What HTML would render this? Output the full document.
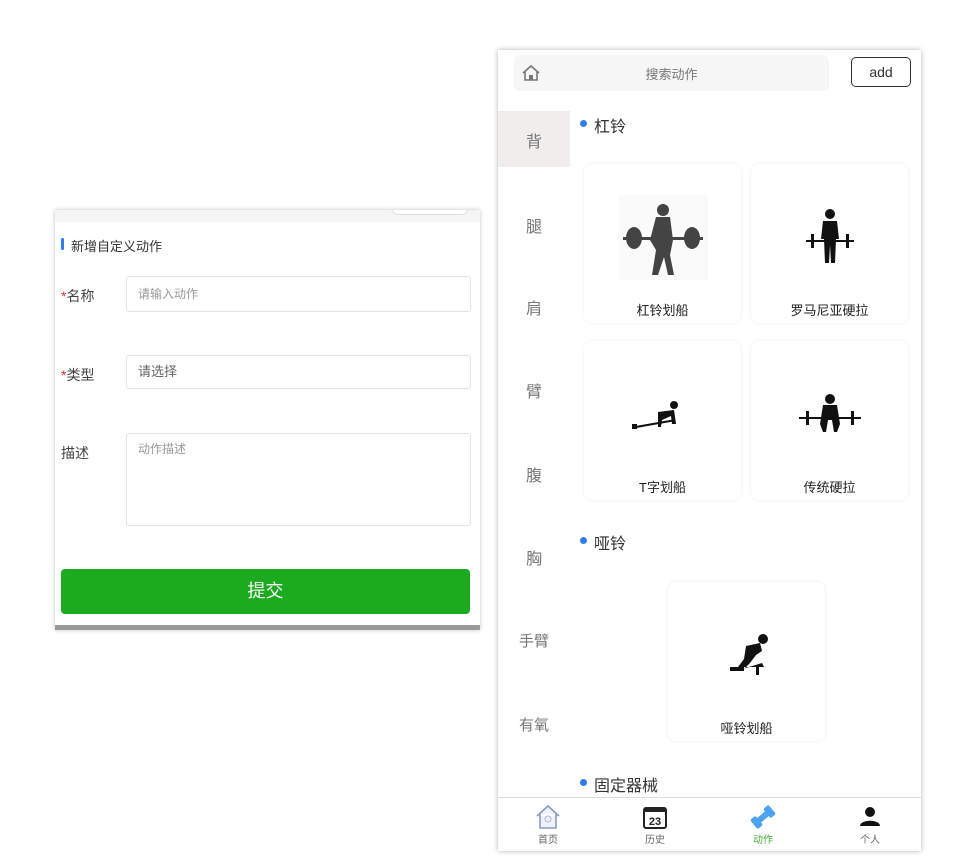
<!DOCTYPE html>
<html><head><meta charset="utf-8"><style>
*{margin:0;padding:0;box-sizing:border-box}
body{width:956px;height:866px;background:#fff;position:relative;overflow:hidden;font-family:"Liberation Sans","Noto Sans CJK SC",sans-serif;color:#333}
.abs{position:absolute}
#L{left:55px;top:210px;width:425px;height:420px;background:#fff;box-shadow:0 0 4px rgba(0,0,0,.25);overflow:hidden}
#R{left:498px;top:50px;width:423px;height:801px;background:#fff;box-shadow:0 0 5px rgba(0,0,0,.3);overflow:hidden}
.inp{position:absolute;left:71px;width:345px;border:1px solid #e3e3e3;border-radius:3px;font-size:12px;color:#999;padding-left:11px}
.lab{position:absolute;left:6px;font-size:14px;color:#444}
.lab b{color:#d33;font-weight:normal}
.side{position:absolute;left:0;width:72px;text-align:center;font-size:16px;color:#777}
.card{position:absolute;width:157px;height:159px;border-radius:8px;box-shadow:0 0 3px rgba(0,0,0,.08);background:#fff}
.card .t{position:absolute;left:0;right:0;bottom:4px;text-align:center;font-size:13px;color:#222}
.card svg{position:absolute;left:34px;top:31px}
.h{position:absolute;left:96px;font-size:16px;color:#333}
.h:before{content:"";position:absolute;left:-14px;top:7px;width:7px;height:7px;border-radius:50%;background:#2f7cf0}
.tab{position:absolute;top:0;width:60px;text-align:center;font-size:10px;color:#666}
</style></head><body>
<div id="L" class="abs">
 <div class="abs" style="left:0;top:0;width:425px;height:12px;background:#f5f5f5"></div>
 <div class="abs" style="left:336px;top:-10px;width:78px;height:15px;border:1px solid #ddd;border-radius:8px;background:#fff"></div>
 <div class="abs" style="left:6px;top:28px;width:3px;height:12px;background:#2f7cf0;border-radius:2px"></div>
 <div class="abs" style="left:16px;top:26px;font-size:13px;color:#333">新增自定义动作</div>
 <div class="lab" style="top:76px"><b>*</b>名称</div>
 <div class="inp" style="top:66px;height:36px;line-height:34px">请输入动作</div>
 <div class="lab" style="top:155px"><b>*</b>类型</div>
 <div class="inp" style="top:145px;height:34px;line-height:32px;color:#666;font-size:13px">请选择</div>
 <div class="lab" style="top:233px">描述</div>
 <div class="inp" style="top:223px;height:93px;padding-top:6px">动作描述</div>
 <div class="abs" style="left:6px;top:359px;width:409px;height:45px;background:#1cab1f;border-radius:4px;color:#fff;font-size:18px;text-align:center;line-height:45px">提交</div>
 <div class="abs" style="left:0;top:415px;width:425px;height:5px;background:#999"></div>
</div>
<div id="R" class="abs">
 <div class="abs" style="left:16px;top:5px;width:315px;height:36px;background:#f6f6f6;border-radius:6px"></div>
 <svg class="abs" style="left:24px;top:14px" width="18" height="18" viewBox="0 0 18 18"><path d="M1 9L9 2L17 9M3 8V16H15V8" fill="none" stroke="#777" stroke-width="1.6"/><rect x="7" y="11" width="4" height="5" fill="#777"/></svg>
 <div class="abs" style="left:16px;width:315px;top:14px;text-align:center;font-size:13px;color:#777">搜索动作</div>
 <div class="abs" style="left:353px;top:7px;width:60px;height:30px;border:1px solid #333;border-radius:5px;text-align:center;line-height:28px;font-size:14px;color:#333">add</div>
 <div class="abs" style="left:0;top:61px;width:72px;height:56px;background:#efeeec"></div>
 <div class="side" style="top:78px">背</div>
 <div class="side" style="top:163px">腿</div>
 <div class="side" style="top:245px">肩</div>
 <div class="side" style="top:328px">臂</div>
 <div class="side" style="top:412px">腹</div>
 <div class="side" style="top:495px">胸</div>
 <div class="side" style="top:580px;font-size:15px">手臂</div>
 <div class="side" style="top:664px;font-size:15px">有氧</div>
 <div class="h" style="top:63px">杠铃</div>
 <div class="card" style="left:86px;top:114px"><svg width="90" height="85" viewBox="0 0 90 85"><rect width="90" height="85" fill="#fafafa"/><circle cx="45" cy="15" r="6" fill="#444"/><path d="M38 22L52 22L55 45L52 60L56 80H50L46 62L40 80H34L38 55L32 45Z" fill="#444"/><rect x="5" y="42" width="80" height="3" fill="#444"/><ellipse cx="16" cy="43" rx="8" ry="11" fill="#444"/><ellipse cx="74" cy="43" rx="8" ry="11" fill="#444"/></svg><div class="t">杠铃划船</div></div>
 <div class="card" style="left:253px;top:114px"><svg width="90" height="85" viewBox="0 0 90 85"><circle cx="45" cy="19" r="5" fill="#111"/><path d="M38 26H52L54 44H51L50 68H46L45 50L44 68H40L39 44H36Z" fill="#111"/><rect x="21" y="45" width="48" height="2" fill="#111"/><rect x="26" y="39" width="3" height="14" fill="#111"/><rect x="61" y="39" width="3" height="14" fill="#111"/></svg><div class="t">罗马尼亚硬拉</div></div>
 <div class="card" style="left:86px;top:291px"><svg width="90" height="85" viewBox="0 0 90 85"><circle cx="56" cy="33" r="4" fill="#111"/><path d="M40 40L56 38L58 52L54 52L53 44L44 48L43 55L40 55Z" fill="#111"/><rect x="14" y="51" width="42" height="2" fill="#111" transform="rotate(-10 35 52)"/><rect x="14" y="52" width="5" height="5" fill="#111"/></svg><div class="t">T字划船</div></div>
 <div class="card" style="left:253px;top:291px"><svg width="90" height="85" viewBox="0 0 90 85"><circle cx="45" cy="27" r="5" fill="#111"/><path d="M38 33H52L55 52L52 60H49L47 48L43 48L41 60H38L35 52Z" fill="#111"/><rect x="14" y="45" width="62" height="2" fill="#111"/><rect x="21" y="39" width="3" height="14" fill="#111"/><rect x="66" y="39" width="3" height="14" fill="#111"/></svg><div class="t">传统硬拉</div></div>
 <div class="h" style="top:480px">哑铃</div>
 <div class="card" style="left:170px;top:532px"><svg width="90" height="85" viewBox="0 0 90 85"><circle cx="61" cy="26" r="5" fill="#111"/><path d="M44 33L58 30L60 38L54 42L48 50L40 58L36 54L42 46ZM34 58L60 50L62 54H34Z" fill="#111"/><rect x="28" y="54" width="14" height="4" fill="#111"/><rect x="54" y="54" width="3" height="8" fill="#111"/></svg><div class="t">哑铃划船</div></div>
 <div class="h" style="top:722px">固定器械</div>
 <div class="abs" style="left:0;top:747px;width:423px;height:54px;background:#fff;border-top:1px solid #ddd">
  <div class="tab" style="left:20px"><svg width="26" height="26" viewBox="0 0 26 26" style="margin-top:6px"><path d="M2 12L13 2L24 12M5 10V24H21V10" fill="#eef2fa" stroke="#8a9bc3" stroke-width="1.6"/><circle cx="13" cy="15" r="3" fill="none" stroke="#aab6d4"/></svg><div style="margin-top:-2px">首页</div></div>
  <div class="tab" style="left:127px"><svg width="26" height="26" viewBox="0 0 26 26" style="margin-top:6px"><rect x="2" y="4" width="22" height="20" rx="2" fill="#fff" stroke="#222" stroke-width="2"/><rect x="2" y="4" width="22" height="4" fill="#222"/><text x="13" y="21" font-size="11" font-weight="bold" text-anchor="middle" font-family="Liberation Sans" fill="#222">23</text></svg><div style="margin-top:-2px">历史</div></div>
  <div class="tab" style="left:235px;color:#4aab3a"><svg width="26" height="26" viewBox="0 0 26 26" style="margin-top:6px"><g transform="rotate(-40 13 13)" fill="#4ea3f0"><rect x="1" y="7" width="7" height="12" rx="2"/><rect x="18" y="7" width="7" height="12" rx="2"/><rect x="7" y="10" width="12" height="6"/></g></svg><div style="margin-top:-2px">动作</div></div>
  <div class="tab" style="left:342px"><svg width="26" height="26" viewBox="0 0 26 26" style="margin-top:6px"><circle cx="13" cy="8" r="5" fill="#111"/><path d="M3 22C3 15 23 15 23 22Z" fill="#111"/></svg><div style="margin-top:-2px">个人</div></div>
 </div>
</div>
</body></html>
